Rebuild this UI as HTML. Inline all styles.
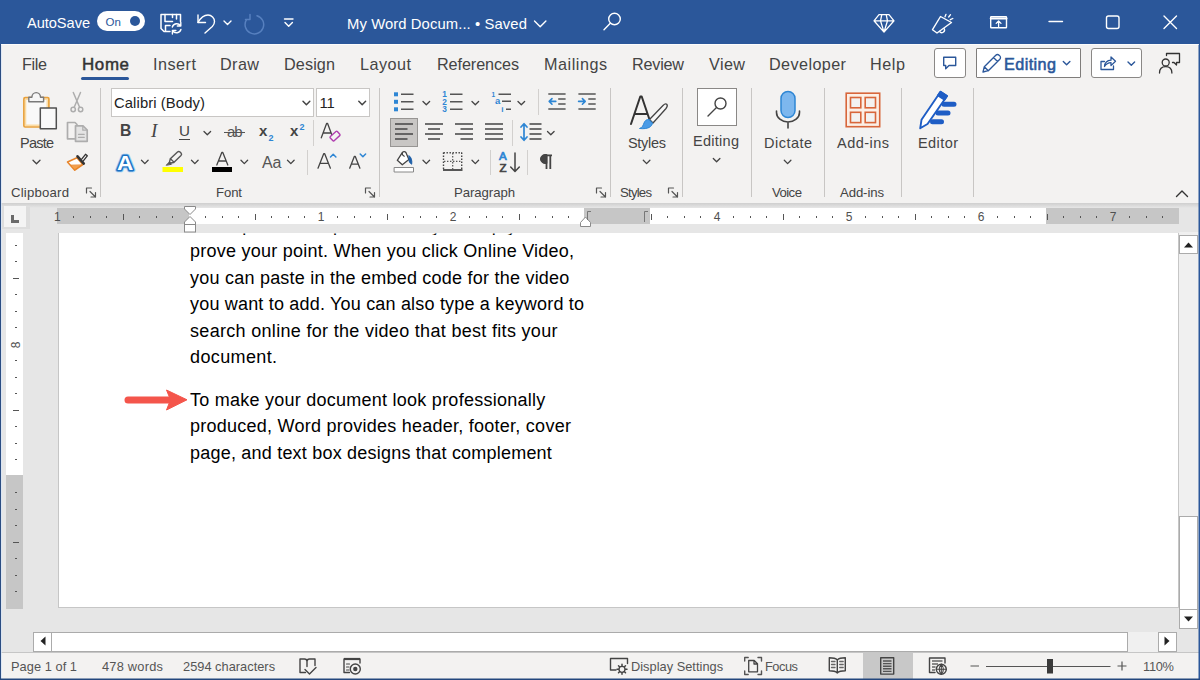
<!DOCTYPE html>
<html lang="en"><head><meta charset="utf-8"><title>Word</title>
<style>
*{box-sizing:border-box;margin:0;padding:0}
html,body{width:1200px;height:680px;overflow:hidden;background:#e6e6e6;font-family:"Liberation Sans",sans-serif;}
body{position:relative}
.t{position:absolute;white-space:nowrap;line-height:1;font-family:"Liberation Sans",sans-serif;}
.abs{position:absolute}
svg{position:absolute;overflow:visible}
#titlebar{left:0;top:0;width:1200px;height:44px;background:#2b579a}
#ribbon{left:0;top:44px;width:1200px;height:159px;background:#f3f2f1}
#ribshadow{left:0;top:203px;width:1200px;height:5px;background:linear-gradient(#cfcfcf,#e6e6e6)}
.sep{position:absolute;width:1px;background:#c8c6c4}
.box{position:absolute;background:#fff;border:1px solid #c8c6c4}
#page{left:58px;top:233px;width:1121px;height:375px;background:#fff;border:1px solid #c6c6c6;border-top:none}
#status{left:0;top:652px;width:1200px;height:28px;background:#f3f2f1;border-top:1px solid #c6c6c6}

</style></head>
<body>
<div class="abs" id="titlebar"></div>
<div class="abs" id="ribbon"></div>
<div class="abs" id="ribshadow"></div>
<div class="abs" id="docbg"></div>
<div class="abs" id="page"></div>
<div class="abs" id="status"></div>
<!--TITLE-->
<svg id="svg-title" width="1200" height="44" viewBox="0 0 1200 44" style="left:0;top:0" fill="none" stroke="#fff" stroke-width="1.4" stroke-linecap="round" stroke-linejoin="round">
  <!-- autosave toggle -->
  <rect x="97" y="11" width="48" height="20" rx="10" fill="#fff" stroke="none"/>
  <circle cx="135" cy="21" r="5" fill="#2b579a" stroke="none"/>
  <!-- save icon -->
  <path d="M170 31.500H164l-3-3V14.500H180.500V21.500" stroke-width="1.500"/>
  <path d="M165 14.500v7h7.500M176.500 14.500v4.500M172.500 14.500v3" stroke-width="1.500"/>
  <path d="M165.500 31v-5.500h4.500" stroke-width="1.500"/>
  <path d="M172.300 27a4.600 4.600 0 0 1 8.200-1.300M180.800 22.500v3.500h-3.500M180.900 29.500a4.600 4.600 0 0 1-8.200 1.300M172.400 34v-3.500h3.500" stroke-width="1.400"/>
  <!-- undo -->
  <path d="M198 15v7.500h7.500"/>
  <path d="M198 22.500c2.500-4.500 6-7.500 10-7.500a6.500 6.500 0 0 1 6.500 6.500c0 2-.8 3.600-2.200 5l-7.300 6.500"/>
  <path d="M224 21l3.500 3.500 3.500-3.500"/>
  <!-- redo dim -->
  <g stroke="#5780bf" stroke-width="1.500">
  <path d="M257 15.700a9.300 9.300 0 1 1-10.500 4"/>
  <path d="M250 14.500v5h-4.500"/>
  </g>
  <!-- customize -->
  <path d="M284.500 19h8.500M285 22.500l3.700 3.700 3.700-3.700"/>
  <!-- title chevron -->
  <path d="M534.500 21l5.700 5.700 5.700-5.700"/>
  <!-- search -->
  <circle cx="614.500" cy="19" r="5.800"/>
  <path d="M610.300 23.300l-6.300 6.500"/>
  <!-- diamond -->
  <path d="M879 14.700h10l5 6.100-10 11.300-10-11.300zM874 20.800h20M881.800 14.700l-1.300 6.100 3.500 11.300 3.500-11.300-1.300-6.100" stroke-width="1.300"/>
  <!-- megaphone -->
  <path d="M940.500 16.500l11 6-14.500 10.500-4.500-3.300z" stroke-width="1.400"/>
  <path d="M939.500 31.300a2.600 2.600 0 0 0 4.600-2.800" stroke-width="1.300"/>
  <path d="M946 14.300l-1 2.500M950.500 14.700l-1.800 2.300M952.800 18.500l-2.500 1.200" stroke-width="1.300"/>
  <!-- ribbon display -->
  <rect x="990.700" y="16.700" width="15.800" height="11" rx=".5"/>
  <path d="M990.700 18.500h15.800" stroke-width="2"/><path d="M998.600 26.500v-5M996.200 23.400l2.400-2.400 2.400 2.400" stroke-width="1.300"/>
  <!-- min / max / close -->
  <path d="M1049 21.500h13.500"/>
  <rect x="1106.500" y="16" width="12.500" height="12.500" rx="2"/>
  <path d="M1164 16l12.500 12.500M1176.500 16l-12.500 12.500"/>
</svg>
<!--TABS-->
<div class="abs" style="left:81px;top:77px;width:48px;height:3px;background:#2b579a;border-radius:1.5px"></div>
<div class="box" style="left:934px;top:48px;width:32px;height:30px;border-color:#8a8886;border-radius:3px"></div>
<div class="box" style="left:976px;top:48px;width:105px;height:30px;border-color:#7f7d7b;border-radius:1px"></div>
<div class="box" style="left:1091px;top:48px;width:51px;height:30px;border-color:#8a8886;border-radius:3px"></div>
<svg id="svg-tabs" width="1200" height="40" viewBox="0 44 1200 40" style="left:0;top:44px" fill="none" stroke="#2b579a" stroke-width="1.4" stroke-linecap="round" stroke-linejoin="round">
  <!-- comment -->
  <path d="M943.700 57.200h12v8.300h-6.700l-3.300 3.300v-3.300h-2z"/>
  <!-- pencil -->
  <path d="M983 72l1.300-5.300 11.500-11.500a2.300 2.300 0 0 1 3.300 0l.7.700a2.300 2.300 0 0 1 0 3.300l-11.500 11.500zM993.500 57.500l4 4M984.300 66.700l4 4" stroke-width="1.300"/>
  <path d="M1063.300 61.500l3.300 3.300 3.300-3.300"/>
  <!-- share -->
  <path d="M1104.500 61.500h-3.500v8h12.500v-3.500" stroke-width="1.300"/>
  <path d="M1104.500 66.500c.3-3.800 2.500-6 6.500-6.300v-3.200l4.500 4.300-4.500 4.300v-3c-3 .1-5 1.400-6.500 3.900z" stroke-width="1.300"/>
  <path d="M1128 62l3.300 3.300 3.300-3.300"/>
  <!-- person comment -->
  <g stroke="#333" stroke-width="1.300">
  <circle cx="1165.700" cy="62.500" r="3.500"/>
  <path d="M1159.500 73c0-4.300 2.600-6.300 6.200-6.300s6.200 2 6.200 6.300"/>
  <path d="M1166.500 55.500v-2h13v9h-3v2.500l-2.500-2.500h-1.500"/>
  </g>
</svg>
<!--RIBBON-->
<div class="sep" style="left:100px;top:88px;height:109px"></div>
<div class="sep" style="left:379px;top:88px;height:109px"></div>
<div class="sep" style="left:610px;top:88px;height:109px"></div>
<div class="sep" style="left:682px;top:88px;height:109px"></div>
<div class="sep" style="left:751px;top:88px;height:109px"></div>
<div class="sep" style="left:824px;top:88px;height:109px"></div>
<div class="sep" style="left:901px;top:88px;height:109px"></div>
<div class="sep" style="left:973px;top:88px;height:109px"></div>
<div class="sep" style="left:313px;top:120px;height:26px;background:#d2d0ce"></div>
<div class="sep" style="left:307px;top:150px;height:25px;background:#d2d0ce"></div>
<div class="sep" style="left:538px;top:89px;height:26px;background:#d2d0ce"></div>
<div class="sep" style="left:512px;top:120px;height:26px;background:#d2d0ce"></div>
<div class="sep" style="left:490px;top:150px;height:25px;background:#d2d0ce"></div>
<div class="sep" style="left:527px;top:150px;height:25px;background:#d2d0ce"></div>
<div class="box" style="left:111px;top:88px;width:203px;height:29px;"></div>
<div class="box" style="left:316px;top:88px;width:54px;height:29px;"></div>
<div class="box" style="left:390px;top:118px;width:28px;height:29px;background:#c8c6c4;border-color:#979593"></div>
<div class="box" style="left:697px;top:88px;width:40px;height:38px;border-color:#8a8886"></div>
<svg id="svg-rib" width="1200" height="124" viewBox="0 84 1200 124" style="left:0;top:84px" fill="none" stroke="#444" stroke-width="1.3" stroke-linecap="round" stroke-linejoin="round">
<!-- paste -->
<rect x="23.900" y="97.700" width="25" height="29.300" rx="1.200" fill="#fbf3e6" stroke="#e9a13b" stroke-width="1.700"/>
<rect x="25.600" y="99.400" width="21.600" height="25.900" fill="#f9f9f9" stroke="#fbdca4" stroke-width="1.400"/>
<path d="M28.800 101.800v-4.600h3.100a4.300 4.600 0 0 1 8.600 0h3.100v4.600z" fill="#f6f6f6" stroke="#7a7a7a" stroke-width="1.400"/>
<rect x="40.300" y="108" width="16" height="20.800" fill="#f9f9f9" stroke="#505050" stroke-width="1.500"/>
<path d="M33 160.300l3.500 3.500 3.500-3.500"/>
<!-- scissors -->
<g stroke="#adadad" stroke-width="1.500">
<path d="M73.300 92.500l6.300 14.800M80.500 92.500l-6.300 14.800"/>
<circle cx="73.200" cy="109.500" r="2.200"/><circle cx="80.600" cy="109.500" r="2.200"/>
</g>
<!-- copy -->
<g stroke="#adadad" stroke-width="1.700">
<path d="M74.500 138.800h-7v-16.300h7.500l2 2"/>
<path d="M75.500 125.800h7.500l4.200 4.200v11.300h-11.700z" fill="#e4e4e4"/>
<path d="M82.800 126v4.200h4.200" stroke-width="1.200"/>
<path d="M78.500 134.300h5.700M78.500 137.400h5.700" stroke-width="1.300"/>
</g>
<!-- format painter -->
<path d="M67.500 162l9.500-4.300 5.800 6.800-8 5.700z" fill="#fff" stroke="#e8852b" stroke-width="1.600"/>
<path d="M70.500 165.500l4.300 4.200 6.500-4.500z" fill="#f5a04a" stroke="#e8852b" stroke-width="1"/>
<path d="M77.500 156.300l6.300 7.300" stroke="#333" stroke-width="2.600" stroke-linecap="round"/>
<path d="M81.500 159.300l4-5 1.800 1.500-4 5" fill="#f3f2f1" stroke="#333" stroke-width="1.300"/>
<!-- dialog launchers -->
<g id="dl" stroke="#555" stroke-width="1.200">
<path d="M86.500 193v-5h5M90 191.500l5.500 5.500M95.500 192.500v4.500h-4.500"/>
</g>
<use href="#dl" x="279"/><use href="#dl" x="510"/><use href="#dl" x="582"/>
<!-- font combos chevrons -->
<path d="M303 101.300l3.400 3.400 3.400-3.400M358.800 101.300l3.400 3.400 3.400-3.400" stroke-width="1.500"/>
<!-- row2 chevrons -->
<path d="M204 131.500l3.300 3.300 3.300-3.300"/>
<!-- clear formatting: A + eraser -->
<path d="M321.300 137.800l5.300-14.300h1l5.300 14.300M323 133h8" stroke="#444" stroke-width="1.300"/>
<rect x="330.300" y="133.300" width="9.500" height="5.600" rx="1" transform="rotate(-42 335 136.100)" fill="#f3f2f1" stroke="#b13fb0" stroke-width="1.400"/>
<!-- row3: text effects A -->
<g font-family="Liberation Sans, sans-serif" font-size="20.500" text-anchor="middle" stroke-linejoin="round" transform="translate(125.200 169.500) scale(1.100 1)">
<text x="0" y="0" font-weight="bold" fill="#a3d0f3" stroke="#a3d0f3" stroke-width="4.600">A</text>
<text x="0" y="0" font-weight="bold" fill="#1a72c4" stroke="#1a72c4" stroke-width="2.800">A</text>
<text x="0" y="0" font-weight="bold" fill="#fff" stroke="none">A</text>
</g>
<path d="M141.500 160.300l3.300 3.300 3.300-3.300M191.500 160.300l3.300 3.300 3.300-3.300M241 160.300l3.300 3.300 3.300-3.300M287.500 160.300l3.300 3.300 3.300-3.300"/>
<!-- highlighter -->
<rect x="162.500" y="167" width="20.500" height="5" fill="#ffff00" stroke="none"/>
<path d="M169.500 162l.8-3.200 7.200-6.800a1.800 1.800 0 0 1 2.500 0l1 1a1.800 1.800 0 0 1 0 2.500l-7.200 7-3.300.5z" stroke="#555" stroke-width="1.400"/>
<path d="M170.500 158.800l3 3" stroke="#555"/>
<path d="M166.500 165l2.800-3 2 2z" fill="#555" stroke="#555" stroke-width="1"/>
<!-- font color -->
<rect x="212" y="167" width="20" height="5" fill="#000" stroke="none"/>
<path d="M216.800 165l5-12.500h1l5 12.500M218.500 161h7.600" stroke="#444" stroke-width="1.300"/>
<!-- grow / shrink font -->
<path d="M318 168.200l5.700-14.500h1l5.700 14.500M320 163.300h8.500" stroke="#444" stroke-width="1.300"/>
<path d="M330.500 157l2.700-2.800 2.700 2.800" stroke="#2e86d4" stroke-width="1.500"/>
<path d="M349.700 168.200l4.600-11.700h1l4.600 11.700M351.500 164.200h6.700" stroke="#444" stroke-width="1.300"/>
<path d="M360.200 154l2.700 2.800 2.700-2.800" stroke="#2e86d4" stroke-width="1.500"/>
<!-- PARAGRAPH row1 -->
<g stroke="#555" stroke-width="1.500" stroke-linecap="butt">
<path d="M401 94.300h12.500M401 101.800h12.500M401 109.300h12.500"/>
<path d="M450 94.300h12.500M450 101.800h12.500M450 109.300h12.500"/>
<path d="M498.500 94.300h12.500M502 101.300h9M506 109.300h5"/>
<path d="M548.300 94h17.300M558.200 99h7.400M558.200 104h7.400M548.300 109h17.300"/>
<path d="M578.400 94h17.300M588.300 99h7.400M588.300 104h7.400M578.400 109h17.300"/>
</g>
<g fill="#2e86d4" stroke="none">
<rect x="394" y="92.300" width="4" height="4"/><rect x="394" y="99.800" width="4" height="4"/><rect x="394" y="107.300" width="4" height="4"/>
</g>
<path d="M423 101.500l3.300 3.300 3.300-3.300M472 101.500l3.300 3.300 3.300-3.300M518 101.500l3.300 3.300 3.300-3.300"/>
<g stroke="#2e86d4" stroke-width="1.600">
<path d="M555.800 101.400h-6M552 98.600l-2.800 2.800 2.800 2.800"/>
<path d="M578.600 101.400h6M582.400 98.600l2.800 2.800-2.800 2.800"/>
</g>
<!-- row2 align -->
<g stroke="#444" stroke-width="1.500" stroke-linecap="butt">
<path d="M395 124h18M395 129h12.500M395 134h18M395 139h12.500"/>
<path d="M425 124h18M428 129h12M425 134h18M428 139h12"/>
<path d="M455 124h18M460.500 129h12.500M455 134h18M460.500 139h12.500"/>
<path d="M485 124h18M485 129h18M485 134h18M485 139h18"/>
<path d="M529.500 124h12M529.500 129h12M529.500 134h12M529.500 139h12"/>
</g>
<path d="M524 124v16M521 127l3-3.300 3 3.300M521 137l3 3.300 3-3.300" stroke="#2e86d4" stroke-width="1.700"/>
<path d="M547.500 131.500l3.300 3.300 3.300-3.300"/>
<!-- row3 shading bucket -->
<rect x="394.500" y="167.500" width="19" height="4.500" fill="#fff" stroke="#888" stroke-width="1"/>
<path d="M397.300 160.300l5-7.600c1-1.300 2.600-1.300 3.600-.2l3 7.100-6.600 5.200z" fill="#fff" stroke="#444" stroke-width="1.300"/>
<path d="M402.300 152.700c-.3 1.500 .5 3 2 3.600" stroke="#444" stroke-width="1.100"/>
<path d="M409.200 155.800c2.200 1.700 3 4.800 2.500 8.400c-1.800-.8-2.800-2.500-2.700-4.600z" fill="#1e5fa8" stroke="#1e5fa8" stroke-width="1"/>
<path d="M423 160.300l3.300 3.300 3.300-3.300M472 160.300l3.300 3.300 3.300-3.300"/>
<!-- borders -->
<g stroke="#444" stroke-width="1.400" stroke-dasharray="1.400 1.600" stroke-linecap="butt">
<path d="M443.500 152.700h18.500M443.500 152.500v17.500M461.700 152.500v17.500"/>
</g>
<path d="M443 170h19.500" stroke="#444" stroke-width="1.800" stroke-linecap="butt"/>
<path d="M452.700 153v16.500M444 161.300h17.500" stroke="#555" stroke-width="1.200" stroke-dasharray="1.400 1.600" stroke-linecap="butt"/>
<!-- sort -->
<path d="M515 153v18M510.700 167l4.300 4.500 4.300-4.500" stroke="#444" stroke-width="1.500"/>
<!-- pilcrow -->
<path d="M546.500 169v-13.500M550.300 169v-13.500M552 155.300h-7" stroke="#444" stroke-width="1.800" stroke-linecap="butt"/>
<path d="M546.500 154.500h-1.500a4.500 4.500 0 0 0 0 9h1.500z" fill="#444" stroke="#444" stroke-width="1"/>
<!-- STYLES big A + brush -->
<path d="M631 124l9.300-27.500h1.400l9.300 27.500M634.800 114h12" stroke="#333" stroke-width="2"/>
<path d="M666.700 104.300c1 1 .5 2.700-.7 4.200l-13 14.500-3.500-3.500 13.500-14c1.200-1.200 2.700-2.200 3.700-1.200z" fill="#f8f8f8" stroke="#444" stroke-width="1.300"/>
<path d="M649 119.500l3.500 3.500c-.5 3.500-4 6.500-13 5.500 3-1 3.500-3 4.500-5.500s2.500-3.800 5-3.500z" fill="#4a9be6" stroke="#2e86d4" stroke-width="1"/>
<path d="M643.300 160.300l3.300 3.300 3.300-3.300"/>
<!-- EDITING magnifier -->
<circle cx="720.500" cy="103.500" r="5.500" stroke="#444" stroke-width="1.400"/>
<path d="M716.500 107.500l-8.500 8.500" stroke="#444" stroke-width="1.400"/>
<path d="M713.300 158.500l3.300 3.300 3.300-3.300"/>
<!-- DICTATE mic -->
<rect x="781" y="91.500" width="14" height="26" rx="7" fill="#7db7ee" stroke="#2e86d4" stroke-width="1.500"/>
<path d="M776.500 111v1.500a11.500 9.500 0 0 0 23 0v-1.500M788 122v6" stroke="#444" stroke-width="1.600"/>
<path d="M784.300 160.300l3.300 3.300 3.300-3.300"/>
<!-- ADD-INS -->
<g stroke="#d8663b" stroke-width="1.600" stroke-linejoin="miter">
<rect x="846.200" y="93.200" width="33.500" height="33.500" fill="#fcefe6"/>
<rect x="850.500" y="97.500" width="10.300" height="10.300" fill="#f3f2f1"/><rect x="865.200" y="97.500" width="10.300" height="10.300" fill="#f3f2f1"/>
<rect x="850.500" y="112.300" width="10.300" height="10.300" fill="#f3f2f1"/><rect x="865.200" y="112.300" width="10.300" height="10.300" fill="#f3f2f1"/>
</g>
<!-- EDITOR -->
<g stroke="#1e5dc5" stroke-width="5" stroke-linecap="round">
<path d="M944 104.300h10M938 113h10M932.500 121.700h9"/>
</g>
<path d="M940.500 91.800l6.500 4.200-19.500 28-7.300 4.300 1.300-8.500z" fill="#fff" stroke="#1e5dc5" stroke-width="1.900"/>
<path d="M940.500 91.800l6.500 4.200-2.500 3.600-6.500-4.200z" fill="#1e5dc5" stroke="#1e5dc5" stroke-width="1.900"/>
<!-- collapse -->
<path d="M1176.500 196.500l5.500-5.500 5.500 5.500" stroke="#333" stroke-width="1.400"/>
</svg>
<div class="abs" style="left:179px;top:139px;width:11px;height:1px;background:#444"></div>
<div class="abs" style="left:223.500px;top:132px;width:21px;height:1px;background:#555"></div>
<!--DOC-->
<div class="abs" style="left:2px;top:207px;width:28px;height:22px;background:#dddddd"></div>
<div class="abs" style="left:4px;top:206px;width:22px;height:21px;background:#f4f4f4"></div>
<div class="abs" style="left:11px;top:215px;width:3px;height:8px;background:#6a6a6a"></div>
<div class="abs" style="left:11px;top:220px;width:8px;height:3px;background:#6a6a6a"></div>
<div class="abs" style="left:57px;top:208px;width:1122px;height:16px;background:#c6c6c6"></div>
<div class="abs" style="left:189px;top:208px;width:395px;height:16px;background:#fff"></div>
<div class="abs" style="left:650px;top:208px;width:396px;height:16px;background:#fff"></div>
<div class="abs" style="left:6px;top:233px;width:17px;height:242px;background:#fff"></div>
<div class="abs" style="left:6px;top:475px;width:17px;height:134px;background:#c6c6c6"></div>
<div class="abs" style="left:1179px;top:232px;width:20px;height:397px;background:#f0f0f0"></div>
<div class="box" style="left:1179px;top:235px;width:19px;height:19px;border-color:#ababab"></div>
<div class="box" style="left:1179px;top:609px;width:19px;height:20px;border-color:#ababab"></div>
<div class="box" style="left:1179px;top:516px;width:19px;height:94px;border-color:#ababab"></div>
<div class="abs" style="left:33px;top:632px;width:1144px;height:20px;background:#f0f0f0"></div>
<div class="box" style="left:33px;top:632px;width:19px;height:20px;border-color:#ababab"></div>
<div class="box" style="left:51px;top:632px;width:1077px;height:20px;border-color:#ababab"></div>
<div class="box" style="left:1158px;top:632px;width:19px;height:20px;border-color:#ababab"></div>
<svg id="svg-doc" width="1200" height="450" viewBox="0 204 1200 450" style="left:0;top:204px" fill="none" stroke="#444" stroke-width="1">
<path d="M73.5 216v2M90.5 216v2M106.5 216v2M123.5 214v6M139.5 216v2M156.5 216v2M172.5 216v2M205.5 216v2M222.5 216v2M238.5 216v2M255.5 214v6M271.5 216v2M288.5 216v2M304.5 216v2M337.5 216v2M354.5 216v2M370.5 216v2M387.5 214v6M403.5 216v2M420.5 216v2M436.5 216v2M469.5 216v2M486.5 216v2M502.5 216v2M519.5 214v6M535.5 216v2M552.5 216v2M568.5 216v2M651.5 214v6M667.5 216v2M684.5 216v2M700.5 216v2M733.5 216v2M750.5 216v2M766.5 216v2M783.5 214v6M799.5 216v2M816.5 216v2M832.5 216v2M865.5 216v2M882.5 216v2M898.5 216v2M915.5 214v6M931.5 216v2M948.5 216v2M964.5 216v2M997.5 216v2M1014.5 216v2M1030.5 216v2M1047.5 214v6M1063.5 216v2M1080.5 216v2M1096.5 216v2M1129.5 216v2M1146.5 216v2M1162.5 216v2" stroke="#555" stroke-width="1" shape-rendering="crispEdges"/>
<path d="M15 245.5h2M15 261.5h2M13 278.5h6M15 294.5h2M15 311.5h2M15 327.5h2M15 360.5h2M15 377.5h2M15 393.5h2M13 410.5h6M15 426.5h2M15 443.5h2M15 459.5h2M15 492.5h2M15 509.5h2M15 525.5h2M13 542.5h6M15 558.5h2M15 575.5h2M15 591.5h2" stroke="#555" stroke-width="1" shape-rendering="crispEdges"/>
<path d="M184.500 206.500h11v2.500l-5.500 5.500-5.500-5.500z" fill="#fff" stroke="#8a8a8a"/>
<path d="M184.500 224.500v-2.500l5.500-5.500 5.500 5.500v2.500z" fill="#fff" stroke="#8a8a8a"/>
<rect x="184.500" y="224.500" width="11" height="7.500" fill="#fff" stroke="#8a8a8a"/>
<path d="M580.500 226.500v-4l5-5.500 5 5.500v4z" fill="#fff" stroke="#8a8a8a"/>
<path d="M644.500 222v-10.500h3.500" stroke="#777"/>
<path d="M587.500 220v-8.500h3.500" stroke="#777"/>
<path d="M128 400H172" stroke="#f4554b" stroke-width="7" stroke-linecap="round"/>
<path d="M166.500 390L187 399.800 166.500 410 170.500 399.800z" fill="#f4554b" stroke="#f4554b" stroke-width="1" stroke-linejoin="round"/>
<path d="M1184 247.500l4.500-5 4.500 5z" fill="#222" stroke="none"/>
<path d="M1184 616.500l4.500 5 4.500-5z" fill="#222" stroke="none"/>
<path d="M45.500 636.500l-5 4.500 5 4.500z" fill="#222" stroke="none"/>
<path d="M1164.500 636.500l5 4.500-5 4.500z" fill="#222" stroke="none"/>
</svg>
<!--STATUS-->
<div class="abs" style="left:863px;top:653px;width:50px;height:26px;background:#c8c8c8"></div>
<svg id="svg-status" width="1200" height="28" viewBox="0 652 1200 28" style="left:0;top:652px" fill="none" stroke="#444" stroke-width="1.400" stroke-linejoin="round" stroke-linecap="round">
<!-- proofing book -->
<path d="M305.500 672.500h-5.500v-13.500h4.500c1.500 0 2.500 1 2.500 2.500v5M307 661.500c0-1.500 1-2.500 2.500-2.500h5.500v6.500"/>
<path d="M305 669.500l4.500 4.500 6.500-6.500"/>
<!-- macro record -->
<path d="M344 659h16" stroke-width="2.200" stroke-linecap="butt"/>
<path d="M344 659v13.500h5.500M360 659v4" />
<path d="M346.500 664h3M346.500 667h2.500M346.500 670h2.500" stroke-width="1.200"/>
<circle cx="355.300" cy="669" r="5" fill="#f3f2f1"/>
<circle cx="355.300" cy="669" r="2.200" fill="#444" stroke="none"/>
<!-- display settings -->
<path d="M616 670h-5.500v-11.500h17v5"/>
<circle cx="622" cy="669.300" r="3" stroke-width="1.300"/>
<path d="M622 664.300v1.500M622 672.800v1.500M617 669.300h1.500M625.500 669.300h1.500M618.500 665.800l1 1M624.500 671.800l1 1M625.500 665.800l-1 1M619.500 671.800l-1 1" stroke-width="1.500"/>
<!-- focus -->
<path d="M744.700 661v-3.500h3.500M758 657.500h3.500v3.500M761.500 671v3.500h-3.500M748.200 674.500h-3.500v-3.500" stroke="#555"/>
<path d="M748.700 660.500h5.500l3.300 3.300v8h-8.800zM754 660.500v3.500h3.500" stroke-width="1.300"/>
<!-- read mode -->
<path d="M837.300 660c-1.500-1.500-4-2.200-8-2.200v13c4 0 6.500.7 8 2.200 1.500-1.500 4-2.200 8-2.200v-13c-4 0-6.500.7-8 2.200zM837.300 660v13"/>
<path d="M831.500 661.500h3.500M831.500 664.500h3.500M831.500 667.500h3.500M839.700 661.500h3.500M839.700 664.500h3.500M839.700 667.500h3.500" stroke-width="1.300" stroke="#666"/>
<!-- print layout -->
<rect x="880.700" y="657.800" width="13" height="16.300" stroke="#444"/>
<path d="M883 661h8.500M883 663.600h8.500M883 666.200h8.500M883 668.800h8.500M883 671.400h8.500" stroke-width="1.400" stroke="#555" stroke-linecap="butt"/>
<!-- web layout -->
<path d="M935 672.500h-5.500v-14.500h15.500v5"/>
<path d="M932 661h10.500M932 664h6M932 667h3.500M932 670h3" stroke-width="1.300" stroke="#666" stroke-linecap="butt"/>
<circle cx="941.300" cy="669.300" r="5" fill="#f3f2f1" stroke-width="1.400"/>
<path d="M936.300 669.300h10M941.300 664.300v10M941.300 664.300c-2.800 2.500-2.800 7.500 0 10M941.300 664.300c2.800 2.500 2.800 7.500 0 10" stroke-width="1.100"/>
<!-- zoom -->
<path d="M970.500 666h8.500M1117.500 666h9M1122 661.500v9M986 666.500h124.500" stroke-width="1.200" stroke="#555" stroke-linecap="butt"/>
<rect x="1047" y="659" width="6" height="14.500" fill="#3b3b3b" stroke="none"/>
</svg>
<!-- window borders -->
<div class="abs" style="left:0;top:44px;width:1px;height:636px;background:#2b4d82"></div>
<div class="abs" style="left:1px;top:44px;width:1px;height:636px;background:rgba(214,228,246,0.7)"></div>
<div class="abs" style="left:1198px;top:44px;width:1px;height:636px;background:rgba(43,87,154,0.5)"></div>
<div class="abs" style="left:1199px;top:44px;width:1px;height:636px;background:#2b579a"></div>
<div class="abs" style="left:0;top:678px;width:1200px;height:1px;background:rgba(36,71,125,0.5)"></div>
<div class="abs" style="left:0;top:679px;width:1200px;height:1px;background:#24477d"></div>
<div class="abs" style="left:1px;top:44px;width:1198px;height:1px;background:rgba(255,255,255,0.75)"></div>

<span class="t" style="left:27.0px;top:16.01px;font-size:14.6px;color:#ffffff;letter-spacing:-0.04px;">AutoSave</span>
<span class="t" style="left:105.5px;top:17.01px;font-size:11.5px;color:#2b579a;">On</span>
<span class="t" style="left:347.0px;top:17.01px;font-size:14.8px;color:#ffffff;letter-spacing:0.10px;">My Word Docum... &bull; Saved</span>
<span class="t" style="left:22.0px;top:56.01px;font-size:16.2px;color:#444444;letter-spacing:-0.36px;">File</span>
<span class="t" style="left:82.0px;top:57.01px;font-size:16.9px;color:#333;letter-spacing:0.65px;-webkit-text-stroke:0.5px #333;">Home</span>
<span class="t" style="left:153.0px;top:56.01px;font-size:16.2px;color:#444444;letter-spacing:0.50px;">Insert</span>
<span class="t" style="left:220.0px;top:56.01px;font-size:16.2px;color:#444444;letter-spacing:0.41px;">Draw</span>
<span class="t" style="left:284.0px;top:56.01px;font-size:16.2px;color:#444444;letter-spacing:0.12px;">Design</span>
<span class="t" style="left:360.0px;top:56.01px;font-size:16.2px;color:#444444;letter-spacing:0.48px;">Layout</span>
<span class="t" style="left:437.0px;top:56.01px;font-size:16.2px;color:#444444;letter-spacing:-0.09px;">References</span>
<span class="t" style="left:544.0px;top:56.01px;font-size:16.2px;color:#444444;letter-spacing:0.52px;">Mailings</span>
<span class="t" style="left:632.0px;top:56.01px;font-size:16.2px;color:#444444;letter-spacing:-0.22px;">Review</span>
<span class="t" style="left:709.0px;top:56.01px;font-size:16.2px;color:#444444;letter-spacing:0.40px;">View</span>
<span class="t" style="left:769.0px;top:56.01px;font-size:16.2px;color:#444444;letter-spacing:0.40px;">Developer</span>
<span class="t" style="left:870.0px;top:56.01px;font-size:16.2px;color:#444444;letter-spacing:0.57px;">Help</span>
<span class="t" style="left:1004.0px;top:56.01px;font-size:16.2px;color:#2b579a;letter-spacing:0.42px;-webkit-text-stroke:0.55px #2b579a;">Editing</span>
<span class="t" style="left:20.0px;top:136.00px;font-size:14.5px;color:#444444;letter-spacing:-0.77px;">Paste</span>
<span class="t" style="left:11.0px;top:186.01px;font-size:13.2px;color:#444444;letter-spacing:0.19px;">Clipboard</span>
<span class="t" style="left:114.0px;top:96.01px;font-size:14.8px;color:#222;letter-spacing:0.10px;">Calibri (Body)</span>
<span class="t" style="left:319.5px;top:96.01px;font-size:14.8px;color:#222;letter-spacing:-0.07px;">11</span>
<span class="t" style="left:216.0px;top:186.01px;font-size:13.2px;color:#444444;letter-spacing:-0.13px;">Font</span>
<span class="t" style="left:454.0px;top:186.01px;font-size:13.2px;color:#444444;letter-spacing:-0.07px;">Paragraph</span>
<span class="t" style="left:628.0px;top:136.00px;font-size:14.5px;color:#444444;letter-spacing:-0.30px;">Styles</span>
<span class="t" style="left:620.0px;top:186.01px;font-size:13.2px;color:#444444;letter-spacing:-0.78px;">Styles</span>
<span class="t" style="left:693.0px;top:134.00px;font-size:14.5px;color:#444444;letter-spacing:0.28px;">Editing</span>
<span class="t" style="left:764.0px;top:136.00px;font-size:14.5px;color:#444444;letter-spacing:0.48px;">Dictate</span>
<span class="t" style="left:772.0px;top:186.01px;font-size:13.2px;color:#444444;letter-spacing:-0.57px;">Voice</span>
<span class="t" style="left:837.0px;top:136.00px;font-size:14.5px;color:#444444;letter-spacing:0.47px;">Add-ins</span>
<span class="t" style="left:840.0px;top:186.01px;font-size:13.2px;color:#444444;letter-spacing:-0.12px;">Add-ins</span>
<span class="t" style="left:918.0px;top:136.00px;font-size:14.5px;color:#444444;letter-spacing:0.42px;">Editor</span>
<span class="t" style="left:11.0px;top:661.01px;font-size:12.8px;color:#555555;letter-spacing:0.05px;">Page 1 of 1</span>
<span class="t" style="left:102.0px;top:661.01px;font-size:12.8px;color:#555555;letter-spacing:0.24px;">478 words</span>
<span class="t" style="left:183.0px;top:661.01px;font-size:12.8px;color:#555555;letter-spacing:0.02px;">2594 characters</span>
<span class="t" style="left:631.0px;top:661.01px;font-size:12.8px;color:#555555;letter-spacing:0.02px;">Display Settings</span>
<span class="t" style="left:765.0px;top:661.01px;font-size:12.8px;color:#555555;letter-spacing:-0.46px;">Focus</span>
<span class="t" style="left:1143.0px;top:661.01px;font-size:12.8px;color:#555555;letter-spacing:-0.26px;">110%</span>
<span class="t" style="left:190.0px;top:217.00px;font-size:18.0px;color:#000;letter-spacing:0.25px;clip-path:inset(16.5px 0 0 0);">Video provides a powerful way to help you</span>
<span class="t" style="left:190.0px;top:242.01px;font-size:18.0px;color:#000;letter-spacing:0.25px;">prove your point. When you click Online Video,</span>
<span class="t" style="left:190.0px;top:269.00px;font-size:18.0px;color:#000;letter-spacing:0.23px;">you can paste in the embed code for the video</span>
<span class="t" style="left:190.0px;top:295.01px;font-size:18.0px;color:#000;letter-spacing:0.19px;">you want to add. You can also type a keyword to</span>
<span class="t" style="left:190.0px;top:322.00px;font-size:18.0px;color:#000;letter-spacing:0.31px;">search online for the video that best fits your</span>
<span class="t" style="left:190.0px;top:348.00px;font-size:18.0px;color:#000;letter-spacing:0.37px;">document.</span>
<span class="t" style="left:190.0px;top:391.01px;font-size:18.0px;color:#000;letter-spacing:0.25px;">To make your document look professionally</span>
<span class="t" style="left:190.0px;top:417.01px;font-size:18.0px;color:#000;letter-spacing:0.25px;">produced, Word provides header, footer, cover</span>
<span class="t" style="left:190.0px;top:444.01px;font-size:18.0px;color:#000;letter-spacing:0.21px;">page, and text box designs that complement</span>
<span class="t" style="left:120.0px;top:123.00px;font-size:15.7px;color:#444;font-weight:bold;">B</span>
<span class="t" style="left:151.0px;top:121.01px;font-size:19.0px;color:#444;font-style:italic;font-family:'Liberation Serif',serif;">I</span>
<span class="t" style="left:179.0px;top:123.01px;font-size:15.2px;color:#444;">U</span>
<span class="t" style="left:227.0px;top:124.00px;font-size:15.0px;color:#555;letter-spacing:-1.19px;">ab</span>
<span class="t" style="left:259.0px;top:123.00px;font-size:15.0px;color:#444;font-weight:bold;">x</span>
<span class="t" style="left:268.5px;top:134.01px;font-size:9.0px;color:#2e86d4;font-weight:bold;">2</span>
<span class="t" style="left:290.0px;top:123.00px;font-size:15.0px;color:#444;font-weight:bold;">x</span>
<span class="t" style="left:299.5px;top:123.01px;font-size:9.0px;color:#2e86d4;font-weight:bold;">2</span>
<span class="t" style="left:262.0px;top:155.01px;font-size:16.0px;color:#555;letter-spacing:-0.08px;">Aa</span>
<span class="t" style="left:442.3px;top:90.01px;font-size:8.3px;color:#2e86d4;font-weight:bold;">1</span>
<span class="t" style="left:442.3px;top:98.01px;font-size:8.3px;color:#2e86d4;font-weight:bold;">2</span>
<span class="t" style="left:442.3px;top:105.01px;font-size:8.3px;color:#2e86d4;font-weight:bold;">3</span>
<span class="t" style="left:491.5px;top:92.01px;font-size:6.5px;color:#2e86d4;font-weight:bold;">1</span>
<span class="t" style="left:495.0px;top:96.01px;font-size:9.5px;color:#2e86d4;font-weight:bold;">a</span>
<span class="t" style="left:501.3px;top:106.01px;font-size:8.0px;color:#2e86d4;font-weight:bold;">i</span>
<span class="t" style="left:499.0px;top:151.01px;font-size:11.5px;color:#2e86d4;-webkit-text-stroke:0.7px #2e86d4;">A</span>
<span class="t" style="left:499.5px;top:163.02px;font-size:11.5px;color:#444;-webkit-text-stroke:0.7px #444;">Z</span>
<span class="t" style="left:54.0px;top:211.01px;font-size:12.0px;color:#505050;">1</span>
<span class="t" style="left:317.7px;top:211.01px;font-size:12.0px;color:#505050;">1</span>
<span class="t" style="left:449.7px;top:211.01px;font-size:12.0px;color:#505050;">2</span>
<span class="t" style="left:713.7px;top:211.01px;font-size:12.0px;color:#505050;">4</span>
<span class="t" style="left:845.7px;top:211.01px;font-size:12.0px;color:#505050;">5</span>
<span class="t" style="left:977.7px;top:211.01px;font-size:12.0px;color:#505050;">6</span>
<span class="t" style="left:1109.7px;top:211.01px;font-size:12.0px;color:#505050;">7</span>
<span class="t" style="left:13.0px;top:338.80px;font-size:12.0px;color:#505050;transform:rotate(-90deg);transform-origin:50% 50%;">8</span>
</body></html>
